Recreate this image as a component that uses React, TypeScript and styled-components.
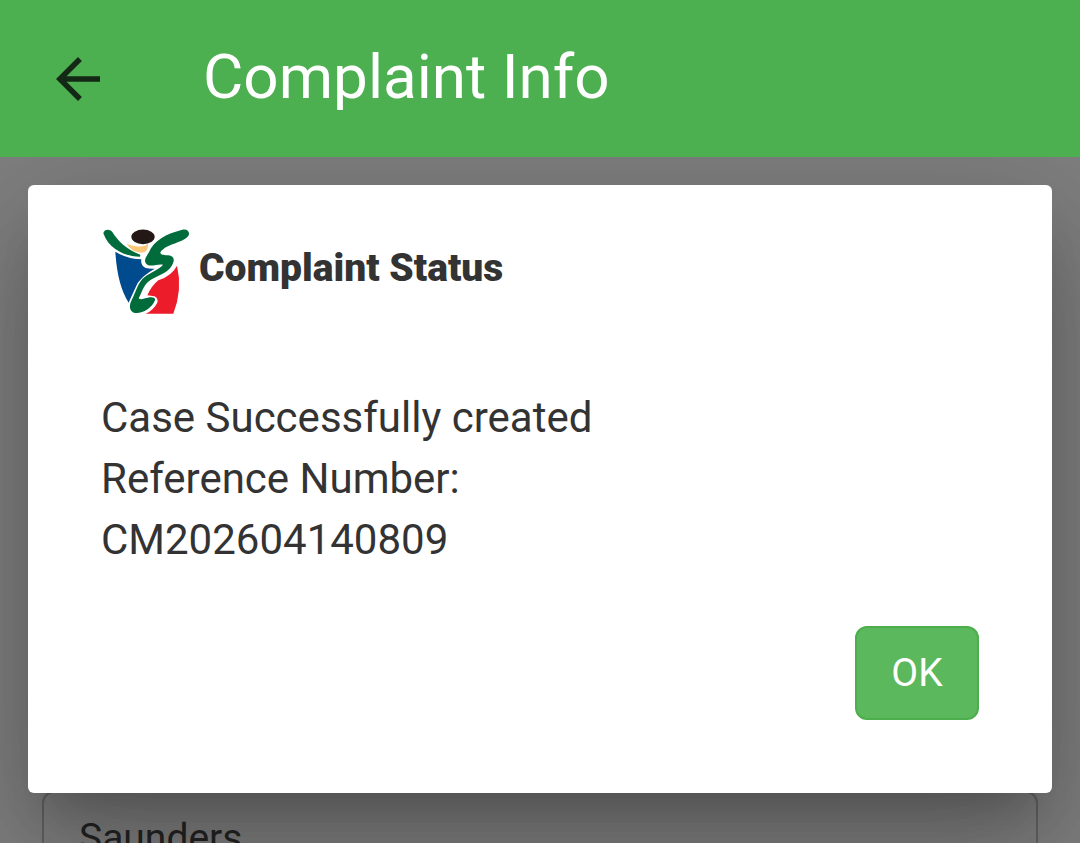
import React from "react";
import styled, { createGlobalStyle } from "styled-components";

const GlobalStyle = createGlobalStyle`
  * { box-sizing: border-box; }
  body {
    margin: 0;
    font-family: Roboto, "Liberation Sans", sans-serif;
    color: #333;
    background: #808080;
  }
`;

const Screen = styled.div`
  display: flex;
  flex-direction: column;
  height: 100vh;
  overflow: hidden;
`;

const AppBar = styled.header`
  flex: none;
  display: flex;
  align-items: center;
  gap: 92px;
  height: 157px;
  padding: 0 45px;
  background: #4caf50;
  position: relative;
  z-index: 1;
`;

const BackButton = styled.button`
  display: flex;
  padding: 0;
  border: 0;
  background: none;
  color: #132815;
`;

const PageTitle = styled.h1`
  margin: 0;
  padding-bottom: 4px;
  font-size: 62px;
  font-weight: 400;
  line-height: 72px;
  color: #fff;
`;

const Content = styled.main`
  flex: 1;
  min-height: 0;
  position: relative;
  overflow: hidden;
  padding: 634px 42px 0;
  background: #fff;
`;

const NameInput = styled.input`
  display: block;
  width: 100%;
  height: 94px;
  padding: 0 35px;
  border: 2px solid #c4c4c4;
  border-radius: 12px;
  background: transparent;
  color: #484848;
  font: 400 39px Roboto, "Liberation Sans", sans-serif;
`;

const Backdrop = styled.div`
  position: absolute;
  inset: 0;
  padding: 28px;
  background: rgba(0, 0, 0, 0.5);
`;

const Dialog = styled.section`
  display: flex;
  flex-direction: column;
  padding: 40px 73px 73px;
  border-radius: 6px;
  background: #fff;
  box-shadow:
    0 31px 42px -20px rgba(0, 0, 0, 0.2),
    0 67px 106px 8px rgba(0, 0, 0, 0.14),
    0 25px 129px 22px rgba(0, 0, 0, 0.12);
`;

const DialogHeader = styled.div`
  display: flex;
  align-items: center;
  gap: 8px;
  height: 94px;
`;

const DialogTitle = styled.h2`
  margin: 0;
  padding-bottom: 8px;
  font-size: 39px;
  font-weight: 900;
  line-height: 48px;
`;

const Message = styled.p`
  margin: 68px 0 56px;
  font-size: 42px;
  line-height: 61px;
`;

const OkButton = styled.button`
  align-self: flex-end;
  width: 124px;
  height: 94px;
  padding: 0;
  border: 2px solid #4cae4c;
  border-radius: 12px;
  background: #5cb85c;
  color: #fff;
  font: 400 39px Roboto, "Liberation Sans", sans-serif;
`;

function BackArrow() {
  return (
    <svg width="66" height="66" viewBox="0 0 24 24" fill="currentColor" aria-hidden="true">
      <path d="M20 11H7.83l5.59-5.59L12 4l-8 8 8 8 1.41-1.41L7.83 13H20v-2z" />
    </svg>
  );
}

function Logo() {
  return (
    <svg width="90" height="90" viewBox="33 36 270 270" aria-hidden="true">
      <path d="M76 110Q114 133 154 133Q151 152 167 159Q180 162 194 161Q159 181 143 204Q127 238 116 263Q82 211 76 110Z" fill="#004b8d" />
      <path d="M261 152Q278 223 250 296H167Q190 286 202 263Q207 243 183 242L172 241Q185 212 205 196Q246 182 261 152Z" fill="#ec1c2b" />
      <path d="M110 87Q158 103 175 85Q175 96 170 106Q164 116 145 112Q124 108 110 87Z" fill="#fbc779" />
      <ellipse cx="159" cy="65.500" rx="35" ry="22" fill="#231815" />
      <path d="M40 55C43 41 59 42 67 51C83 76 107 103 151 119L150 125C103 124 57 103 40 55Z" fill="#006c3b" />
      <path d="M277 44C292 41 300 50 296 61C284 84 231 84 211 112C211 121 224 120 235 121C248 122 254 130 250 142C238 180 191 182 170 205C158 219 153 238 146 250C154 257 164 248 174 248C184 245 198 247 195 256C185 280 158 296 136 294C119 291 116 273 124 257C138 232 144 201 163 187C181 171 208 164 219 149C205 145 184 157 172 149C157 139 170 123 177 112C190 77 229 56 277 44Z" fill="#006c3b" />
    </svg>
  );
}

export default function App() {
  return (
    <Screen>
      <GlobalStyle />
      <AppBar>
        <BackButton type="button" aria-label="Back">
          <BackArrow />
        </BackButton>
        <PageTitle>Complaint Info</PageTitle>
      </AppBar>
      <Content>
        <NameInput type="text" aria-label="Surname" defaultValue="Saunders" />
        <Backdrop>
          <Dialog role="dialog" aria-modal="true" aria-labelledby="status-title">
            <DialogHeader>
              <Logo />
              <DialogTitle id="status-title">Complaint Status</DialogTitle>
            </DialogHeader>
            <Message>
              Case Successfully created
              <br />
              Reference Number:
              <br />
              CM202604140809
            </Message>
            <OkButton type="button">OK</OkButton>
          </Dialog>
        </Backdrop>
      </Content>
    </Screen>
  );
}
